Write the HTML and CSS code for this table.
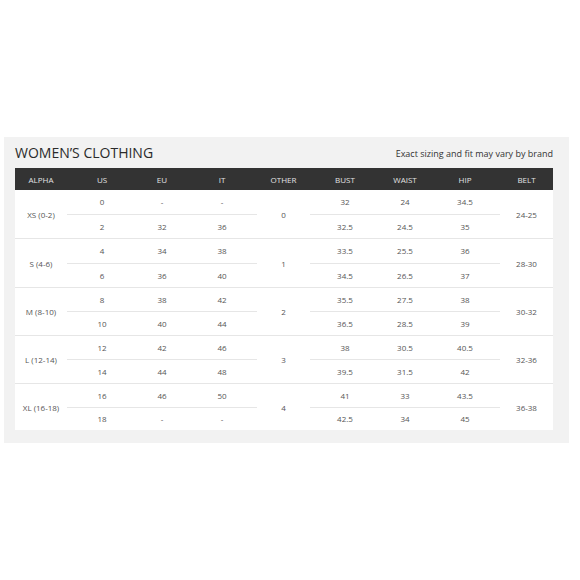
FILE: index.html
```html
<!DOCTYPE html>
<html>
<head>
<meta charset="utf-8">
<link rel="stylesheet" href="styles.css">
</head>
<body>
<div class="panel">
  <div class="titlebar">
    <h1 class="title">WOMEN’S CLOTHING</h1>
    <span class="note">Exact sizing and fit may vary by brand</span>
  </div>
  <div class="chart">
    <div class="head">
      <div class="c alpha">ALPHA</div>
      <div class="block">
        <div class="c">US</div><div class="c">EU</div><div class="c">IT</div>
      </div>
      <div class="c other">OTHER</div>
      <div class="block">
        <div class="c">BUST</div><div class="c">WAIST</div><div class="c">HIP</div>
      </div>
      <div class="c belt">BELT</div>
    </div>

    <div class="group tall">
      <div class="c alpha">XS (0-2)</div>
      <div class="block sub">
        <div class="row"><div class="c">0</div><div class="c">-</div><div class="c">-</div></div>
        <div class="row"><div class="c">2</div><div class="c">32</div><div class="c">36</div></div>
      </div>
      <div class="c other">0</div>
      <div class="block sub">
        <div class="row"><div class="c">32</div><div class="c">24</div><div class="c">34.5</div></div>
        <div class="row"><div class="c">32.5</div><div class="c">24.5</div><div class="c">35</div></div>
      </div>
      <div class="c belt">24-25</div>
    </div>

    <div class="group tall">
      <div class="c alpha">S (4-6)</div>
      <div class="block sub">
        <div class="row"><div class="c">4</div><div class="c">34</div><div class="c">38</div></div>
        <div class="row"><div class="c">6</div><div class="c">36</div><div class="c">40</div></div>
      </div>
      <div class="c other">1</div>
      <div class="block sub">
        <div class="row"><div class="c">33.5</div><div class="c">25.5</div><div class="c">36</div></div>
        <div class="row"><div class="c">34.5</div><div class="c">26.5</div><div class="c">37</div></div>
      </div>
      <div class="c belt">28-30</div>
    </div>

    <div class="group">
      <div class="c alpha">M (8-10)</div>
      <div class="block sub">
        <div class="row"><div class="c">8</div><div class="c">38</div><div class="c">42</div></div>
        <div class="row"><div class="c">10</div><div class="c">40</div><div class="c">44</div></div>
      </div>
      <div class="c other">2</div>
      <div class="block sub">
        <div class="row"><div class="c">35.5</div><div class="c">27.5</div><div class="c">38</div></div>
        <div class="row"><div class="c">36.5</div><div class="c">28.5</div><div class="c">39</div></div>
      </div>
      <div class="c belt">30-32</div>
    </div>

    <div class="group">
      <div class="c alpha">L (12-14)</div>
      <div class="block sub">
        <div class="row"><div class="c">12</div><div class="c">42</div><div class="c">46</div></div>
        <div class="row"><div class="c">14</div><div class="c">44</div><div class="c">48</div></div>
      </div>
      <div class="c other">3</div>
      <div class="block sub">
        <div class="row"><div class="c">38</div><div class="c">30.5</div><div class="c">40.5</div></div>
        <div class="row"><div class="c">39.5</div><div class="c">31.5</div><div class="c">42</div></div>
      </div>
      <div class="c belt">32-36</div>
    </div>

    <div class="group last">
      <div class="c alpha">XL (16-18)</div>
      <div class="block sub">
        <div class="row"><div class="c">16</div><div class="c">46</div><div class="c">50</div></div>
        <div class="row"><div class="c">18</div><div class="c">-</div><div class="c">-</div></div>
      </div>
      <div class="c other">4</div>
      <div class="block sub">
        <div class="row"><div class="c">41</div><div class="c">33</div><div class="c">43.5</div></div>
        <div class="row"><div class="c">42.5</div><div class="c">34</div><div class="c">45</div></div>
      </div>
      <div class="c belt">36-38</div>
    </div>
  </div>
</div>
</body>
</html>
```
FILE: styles.css
```css
html, body {
  margin: 0;
  padding: 0;
  background: #ffffff;
}
body {
  font-family: "Open Sans", "Noto Sans", sans-serif;
  color: #555;
}
.panel {
  margin: 137px 0 0 4px;
  width: 565px;
  height: 306px;
  box-sizing: border-box;
  padding: 0 16px 0 11px;
  background: #f2f2f2;
}
.titlebar {
  height: 31px;
  display: flex;
  align-items: flex-end;
  justify-content: space-between;
  padding-bottom: 7px;
  box-sizing: border-box;
}
.title {
  margin: 0;
  font-size: 14px;
  font-weight: 400;
  color: #2b2b2b;
  line-height: 16px;
  letter-spacing: 0;
}
.note {
  font-size: 9px;
  color: #333;
  line-height: 12px;
  margin-bottom: 1px;
}
.chart {
  background: #fff;
  width: 538px;
}
.head {
  display: flex;
  height: 22px;
  background: #333333;
  color: #e2e2e2;
}
.c {
  display: flex;
  align-items: center;
  justify-content: center;
  font-size: 8px;
  white-space: nowrap;
}
.alpha { width: 52px; }
.other { width: 53px; }
.belt { width: 53px; }
.block {
  width: 190px;
  display: flex;
  padding: 0 5px;
  box-sizing: border-box;
}
.block > .c { width: 60px; }
.head .c { height: 22px; }
.group {
  display: flex;
  height: 48px;
  border-bottom: 1px solid #e6e6e6;
  box-sizing: border-box;
}
.group.tall { height: 49px; }
.group.last { border-bottom: 0; height: 46px; }
.sub {
  flex-direction: column;
  padding: 0;
}
.row {
  flex: 1;
  display: flex;
  padding: 0 5px;
}
.row:first-child { border-bottom: 1px solid #e6e6e6; }
.row .c { width: 60px; }
```
